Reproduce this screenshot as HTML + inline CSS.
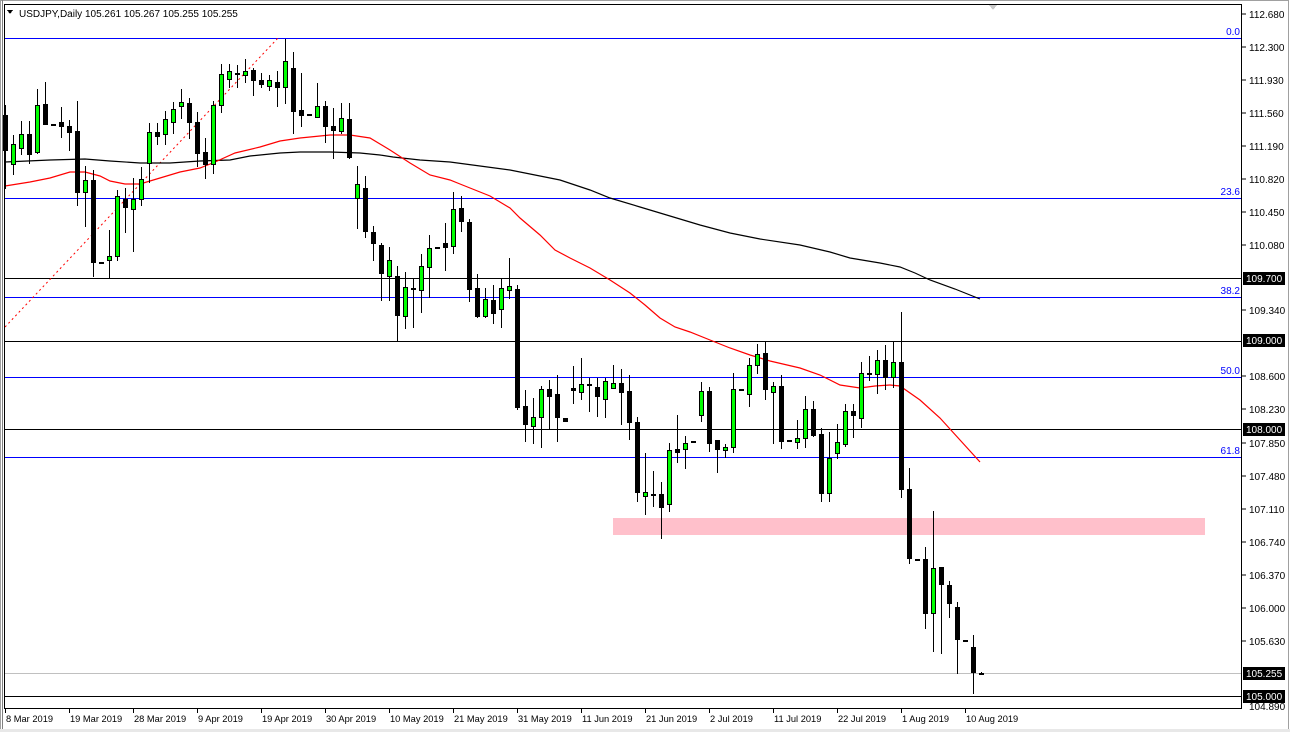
<!DOCTYPE html>
<html><head><meta charset="utf-8"><style>
html,body{margin:0;padding:0;background:#fff;}
body{width:1290px;height:732px;overflow:hidden;position:relative;font-family:"Liberation Sans",sans-serif;}
svg{position:absolute;left:0;top:0;}
text{font-family:"Liberation Sans",sans-serif;font-size:10px;}
.dt text{font-size:9.3px;}
</style></head><body>
<svg id="s" width="1290" height="732" xmlns="http://www.w3.org/2000/svg" shape-rendering="crispEdges">
<rect x="0" y="0" width="1290" height="732" fill="#fff"/>
<rect x="0.5" y="0.5" width="1288" height="730" fill="none" stroke="#a0a0a0"/>
<line x1="2.5" y1="0" x2="2.5" y2="732" stroke="#808080"/>
<rect x="0" y="729" width="1290" height="3" fill="#e8e8e8"/>
<rect x="613" y="518" width="592" height="17" fill="#ffc0cb"/>
<g stroke-width="1">
<line x1="4" y1="38.5" x2="1242" y2="38.5" stroke="#0000ff"/>
<line x1="4" y1="198.5" x2="1242" y2="198.5" stroke="#0000ff"/>
<line x1="4" y1="297.5" x2="1242" y2="297.5" stroke="#0000ff"/>
<line x1="4" y1="377.5" x2="1242" y2="377.5" stroke="#0000ff"/>
<line x1="4" y1="457.5" x2="1242" y2="457.5" stroke="#0000ff"/>
<line x1="4" y1="278.5" x2="1242" y2="278.5" stroke="#000"/>
<line x1="4" y1="341.5" x2="1242" y2="341.5" stroke="#000"/>
<line x1="4" y1="429.5" x2="1242" y2="429.5" stroke="#000"/>
<line x1="4" y1="696.5" x2="1242" y2="696.5" stroke="#000"/>
<line x1="4" y1="673.5" x2="1242" y2="673.5" stroke="#c0c0c0"/>
</g>
<line x1="5" y1="327" x2="278" y2="38" stroke="#ff0000" stroke-dasharray="2,3" shape-rendering="auto"/>
<polyline fill="none" stroke="#000" stroke-width="1.2" shape-rendering="auto" points="5,162 50,160 85,159 110,161 140,163 170,163 200,161 230,160 250,156 280,153 300,152 330,152 360,153 380,155 393,157 420,160 450,162 480,166 510,170 560,180 590,190 610,198 640,207 670,216 700,225 730,233 760,239 800,245 830,252 850,258 880,263 900,267 915,273 930,280 955,289 980,299"/>
<polyline fill="none" stroke="#ff0000" stroke-width="1.2" shape-rendering="auto" points="5,186 30,182 50,178 70,172 85,172 100,176 110,181 125,184 140,184 160,178 180,172 200,168 215,162 235,153 260,147 280,141 300,138 330,135 350,135 370,138 390,150 410,163 430,175 450,180 460,184 470,188 490,196 510,208 520,218 540,235 555,250 570,258 590,268 610,280 630,293 645,305 660,318 675,327 690,332 710,340 730,348 750,355 770,361 800,368 820,375 840,385 860,388 875,386 890,385 900,386 920,400 940,418 960,440 980,462"/>
<g id="c"></g>
<rect x="4.5" y="4.5" width="1237" height="704" fill="none" stroke="#000"/>
<g fill="#000">
<text x="1249" y="18">112.680</text><text x="1249" y="51">112.300</text><text x="1249" y="84">111.930</text><text x="1249" y="117">111.560</text><text x="1249" y="150">111.190</text><text x="1249" y="183">110.820</text><text x="1249" y="216">110.450</text><text x="1249" y="249">110.080</text><text x="1249" y="314">109.340</text><text x="1249" y="380">108.600</text><text x="1249" y="413">108.230</text><text x="1249" y="447">107.850</text><text x="1249" y="480">107.480</text><text x="1249" y="513">107.110</text><text x="1249" y="546">106.740</text><text x="1249" y="579">106.370</text><text x="1249" y="612">106.000</text><text x="1249" y="645">105.630</text><text x="1249" y="710">104.890</text>
</g>
<g stroke="#000">
<line x1="1242" y1="14" x2="1246" y2="14"/><line x1="1242" y1="47" x2="1246" y2="47"/><line x1="1242" y1="80" x2="1246" y2="80"/><line x1="1242" y1="113" x2="1246" y2="113"/><line x1="1242" y1="146" x2="1246" y2="146"/><line x1="1242" y1="179" x2="1246" y2="179"/><line x1="1242" y1="212" x2="1246" y2="212"/><line x1="1242" y1="245" x2="1246" y2="245"/><line x1="1242" y1="310" x2="1246" y2="310"/><line x1="1242" y1="376" x2="1246" y2="376"/><line x1="1242" y1="409" x2="1246" y2="409"/><line x1="1242" y1="443" x2="1246" y2="443"/><line x1="1242" y1="476" x2="1246" y2="476"/><line x1="1242" y1="509" x2="1246" y2="509"/><line x1="1242" y1="542" x2="1246" y2="542"/><line x1="1242" y1="575" x2="1246" y2="575"/><line x1="1242" y1="608" x2="1246" y2="608"/><line x1="1242" y1="641" x2="1246" y2="641"/>
</g>
<rect x="1243" y="272" width="42" height="13" fill="#000"/><text x="1246" y="282" fill="#fff">109.700</text>
<rect x="1243" y="334" width="42" height="13" fill="#000"/><text x="1246" y="344" fill="#fff">109.000</text>
<rect x="1243" y="423" width="42" height="13" fill="#000"/><text x="1246" y="433" fill="#fff">108.000</text>
<rect x="1243" y="667" width="42" height="13" fill="#000"/><text x="1246" y="677" fill="#fff">105.255</text>
<rect x="1243" y="690" width="42" height="13" fill="#000"/><text x="1246" y="700" fill="#fff">105.000</text>
<g fill="#0000ff" text-anchor="end">
<text x="1240" y="35">0.0</text><text x="1240" y="195">23.6</text><text x="1240" y="294">38.2</text><text x="1240" y="374">50.0</text><text x="1240" y="454">61.8</text>
</g>
<g fill="#000" class="dt">
<text x="6" y="722">8 Mar 2019</text><text x="70" y="722">19 Mar 2019</text><text x="134" y="722">28 Mar 2019</text><text x="198" y="722">9 Apr 2019</text><text x="262" y="722">19 Apr 2019</text><text x="326" y="722">30 Apr 2019</text><text x="390" y="722">10 May 2019</text><text x="454" y="722">21 May 2019</text><text x="518" y="722">31 May 2019</text><text x="582" y="722">11 Jun 2019</text><text x="646" y="722">21 Jun 2019</text><text x="710" y="722">2 Jul 2019</text><text x="774" y="722">11 Jul 2019</text><text x="838" y="722">22 Jul 2019</text><text x="902" y="722">1 Aug 2019</text><text x="966" y="722">10 Aug 2019</text>
</g>
<g id="ticks" stroke="#000"></g>
<path d="M7,10 L13,10 L10,14 Z" fill="#000"/>
<text x="19" y="17" fill="#000" font-size="10">USDJPY,Daily  105.261 105.267 105.255 105.255</text>
<path d="M989,5 L997,5 L993,10 Z" fill="#c8c8c8"/>
</svg>
<script>
var d=[
[5,105,115,150,188,0],[13,135,164,144,174,1],[21,121,148,134,154,1],[29,121,134,154,163,0],[37,89,152,105,153,1],[45,82,104,124,124,0],[53,124,124,125,125,0],[61,107,122,126,137,0],[69,120,126,132,150,0],[77,101,131,192,205,0],[85,166,192,180,226,1],[93,170,180,262,276,0],[101,262,262,263,263,0],[109,230,260,256,278,1],[117,190,256,196,260,1],[125,188,199,207,232,0],[133,178,209,199,251,1],[141,167,199,179,205,1],[149,123,163,132,182,1],[157,123,132,136,144,0],[165,111,134,119,144,1],[173,102,122,109,133,1],[181,89,106,102,118,1],[189,98,103,122,138,0],[197,112,122,153,166,0],[205,138,152,164,178,0],[213,101,164,105,173,1],[221,64,105,74,112,1],[229,64,79,71,87,1],[237,65,73,74,87,0],[245,59,75,71,82,1],[253,68,70,80,95,0],
[261,73,80,84,87,0],[269,75,86,80,90,1],[277,71,82,87,106,0],[285,39,87,61,103,1],[293,52,68,111,133,0],[301,73,110,115,126,0],[309,114,114,115,115,0],[317,83,117,106,117,1],[325,101,106,126,142,0],[333,108,126,130,158,0],[341,103,131,118,133,1],[349,103,119,157,158,0],[357,166,198,184,228,1],[365,176,188,231,237,0],[373,226,232,243,260,0],[381,243,245,273,300,0],[389,247,276,260,300,1],[397,266,276,315,340,0],[405,272,316,287,328,1],[413,278,288,289,327,0],[421,254,290,266,312,1],[429,235,267,248,297,1],[437,247,247,248,248,0],[445,223,243,247,270,0],[453,192,246,209,253,1],[461,196,208,221,231,0],[469,219,222,289,301,0],[477,274,288,316,317,0],[485,288,316,299,317,1],[493,285,300,313,323,0],[501,278,309,288,327,1],[509,258,290,286,298,1],
[517,285,289,407,409,0],[525,390,406,424,441,0],[533,398,426,417,443,1],[541,386,417,389,447,1],[549,380,389,396,428,0],[557,375,394,417,441,0],[565,418,418,421,421,0],[573,366,388,390,403,0],[581,358,392,384,399,1],[589,378,384,385,411,0],[597,378,387,396,416,0],[605,378,399,381,417,1],[613,365,388,383,388,1],[621,369,383,392,424,0],[629,375,391,422,439,0],[637,417,422,492,501,0],[645,453,496,492,514,1],[653,471,494,495,506,0],[661,482,494,507,538,0],[669,443,504,450,511,1],[677,415,449,452,462,0],[685,436,449,443,468,1],[693,441,441,442,442,0],[701,382,415,391,421,1],[709,387,391,443,451,0],[717,440,440,449,472,0],[725,444,450,447,457,1],[733,373,447,389,452,1],[741,389,389,390,390,0],[749,358,394,365,406,1],[757,344,365,354,373,1],
[765,341,353,389,399,0],[773,382,392,386,443,1],[781,375,386,441,448,0],[789,440,440,441,441,0],[797,420,442,438,448,1],[805,396,438,409,447,1],[813,401,409,435,436,0],[821,428,434,493,501,0],[829,432,493,458,501,1],[837,424,453,442,458,1],[845,404,444,411,446,1],[853,404,411,415,437,0],[861,362,418,373,427,1],[869,356,373,374,380,0],[877,350,374,360,393,1],[885,345,360,377,389,0],[893,341,377,362,387,1],[901,312,362,489,497,0],[909,468,489,558,563,0],[917,559,559,560,560,0],[925,547,559,613,628,0],[933,511,613,568,651,1],[941,567,567,584,653,0],[949,581,585,603,617,0],[957,602,607,639,673,0],[965,640,640,641,641,0],[973,635,647,672,693,0],[981,672,673,674,674,0]
];
var g=document.getElementById('c'),h='';
d.forEach(function(c){var x=c[0],hi=c[1],o=c[2],cl=c[3],lo=c[4],b=c[5];
var t=Math.min(o,cl),bt=Math.max(o,cl);
h+='<line x1="'+(x+0.5)+'" y1="'+hi+'" x2="'+(x+0.5)+'" y2="'+(lo+1)+'" stroke="#000"/>';
if(bt-t<2){h+='<rect x="'+(x-2)+'" y="'+t+'" width="5" height="'+(b?3:2)+'" fill="'+(b?'#00ff00':'#000')+'" stroke="'+(b?'#000':'none')+'"/>';}
else if(b){h+='<rect x="'+(x-2)+'.5" y="'+t+'.5" width="4" height="'+(bt-t)+'" fill="#00ff00" stroke="#000"/>';}
else{h+='<rect x="'+(x-2)+'" y="'+t+'" width="5" height="'+(bt-t+1)+'" fill="#000"/>';}
});
g.innerHTML=h;
var tk='';for(var i=0;i<16;i++){var x=5+64*i;tk+='<line x1="'+(x+0.5)+'" y1="709" x2="'+(x+0.5)+'" y2="713"/>';}
document.getElementById('ticks').innerHTML=tk;
</script>
</body></html>
